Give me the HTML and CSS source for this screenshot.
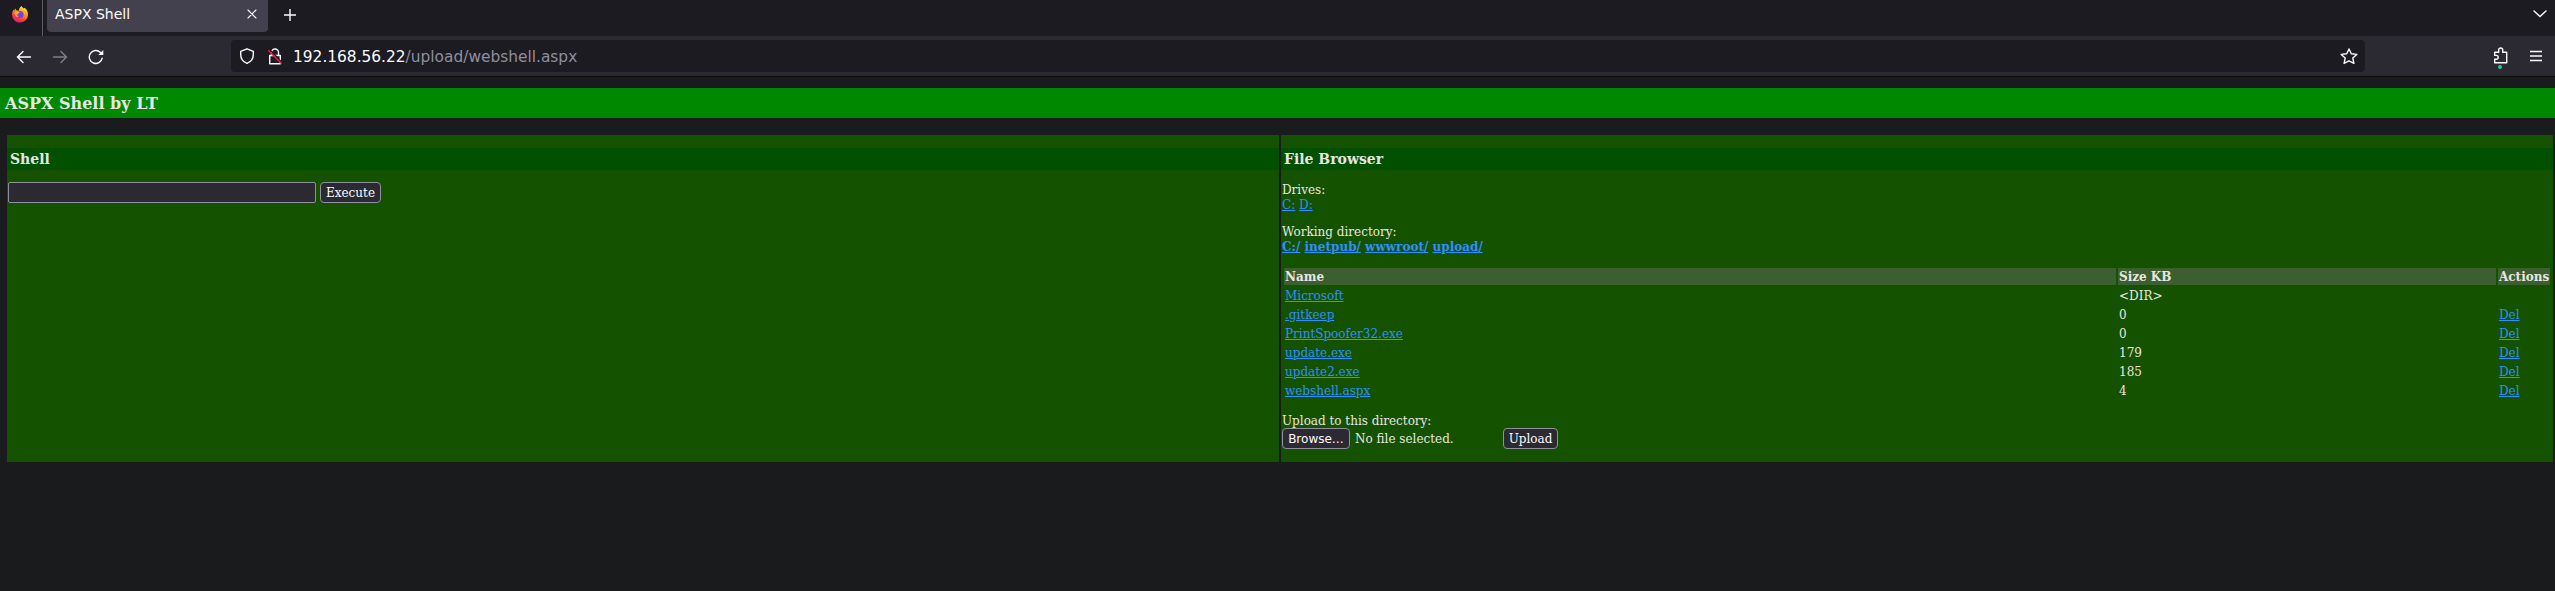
FILE: index.html
```html
<!DOCTYPE html>
<html lang="en">
<head>
<meta charset="utf-8">
<title>ASPX Shell</title>
<link rel="stylesheet" href="styles.css">
</head>
<body>
<header class="tabs">
  <div class="brand">
    <svg width="18" height="18" viewBox="0 0 18 18">
      <defs><linearGradient id="flame" x1=".8" y1="0" x2=".3" y2="1"><stop offset="0" stop-color="#fff44f"/><stop offset=".4" stop-color="#ff980e"/><stop offset=".75" stop-color="#ff3647"/><stop offset="1" stop-color="#e31587"/></linearGradient></defs>
      <path fill="url(#flame)" d="M10.3 1C11 2 12 2.6 12.800 3.500L13.500 2.700C15.800 4.300 17 6.700 17 9.400A8 8 0 0 1 1 9.800C1 7.500 1.700 5.700 2.700 4.500L3.200 5.500 4.300 3.500 5.300 5.300 7.800 5.700C8 3.800 9 2 10.300 1Z"/>
      <circle cx="9" cy="9.500" r="3.600" fill="#7542e5"/>
      <path fill="#ffa436" d="M3.500 7.200C5 6 7 6 8.800 7.500L7 8.800C5.500 9.300 6 11.500 8 11.600 6 13 3.500 11 3.500 7.200Z"/>
    </svg>
  </div>
  <div class="tab"><span>ASPX Shell</span>
    <svg width="10" height="10" viewBox="0 0 10 10"><path class="line thin" d="M1 1 9 9M9 1 1 9"/></svg>
  </div>
  <svg class="plus" width="12" height="12" viewBox="0 0 12 12"><path class="line" d="M6 0V12M0 6H12"/></svg>
  <svg class="chevron" width="14" height="8" viewBox="0 0 14 8"><path class="line" d="M1 1 7 6.500 13 1"/></svg>
</header>
<nav class="toolbar">
  <div class="nav-buttons">
    <svg width="16" height="16" viewBox="0 0 16 16"><path class="line" d="M14.500 8H1.500M7 2.500 1.500 8 7 13.500"/></svg>
    <svg class="dim" width="16" height="16" viewBox="0 0 16 16"><path class="line" d="M1.500 8H14.500M9 2.500 14.500 8 9 13.500"/></svg>
    <svg width="16" height="16" viewBox="0 0 16 16"><path class="line" d="M14.200 9.200A6.500 6.500 0 1 1 12.500 3.500"/><path fill="#fbfbfe" d="M15.300 1V6H10.300Z"/></svg>
  </div>
  <div class="urlbar">
    <svg width="16" height="16" viewBox="0 0 16 16"><path class="line" d="M8 .8 14.300 3.400V6.500C14.300 11 11.500 14 8 15.400 4.500 14 1.700 11 1.700 6.500V3.400Z" stroke-linejoin="round"/></svg>
    <svg class="lock" width="16" height="17" viewBox="0 0 16 17"><path class="line" d="M4.500 7V4.500A3.500 3.500 0 0 1 11.500 4.500V7M2.700 7.500H13.300V15.700H2.700Z" stroke-linejoin="round"/><path d="M2.800 1.700 15.500 15" stroke="#1c1b22" stroke-width="1.500"/><path d="M1.200 2.300 14.700 15.800" stroke="#ff0f47" stroke-width="1.400"/></svg>
    <span class="url"><span class="host">192.168.56.22</span>/upload/webshell.aspx</span>
    <svg class="star" width="18" height="17" viewBox="0 0 18 17"><path class="line" stroke-linejoin="round" d="M9 1 11.300 5.800 16.800 6.400 12.800 10 13.900 15.400 9 12.800 4.100 15.400 5.200 10 1.200 6.400 6.700 5.800Z"/></svg>
  </div>
  <div class="extension">
    <svg width="16" height="23" viewBox="0 0 16 23"><path class="line" stroke-linejoin="round" d="M1.700 5.300H5.700V3A2 2 0 0 1 9.700 3V5.300H13.700V15.800H1.700V12.200H3.300A1.900 1.900 0 0 0 3.300 8.400H1.700Z"/><circle cx="7" cy="20" r="2" fill="#2ac3a2"/></svg>
  </div>
  <svg class="menu" width="12" height="12" viewBox="0 0 12 12"><path class="line" d="M0 1.500H12M0 6H12M0 10.500H12"/></svg>
</nav>
<main>
  <h1>ASPX Shell by LT</h1>
  <div class="panels">
    <section>
      <h2>Shell</h2>
      <form class="command"><input type="text" aria-label="Command"><button type="button">Execute</button></form>
    </section>
    <section>
      <h2>File Browser</h2>
      <p>Drives:<br><a href="#">C:</a> <a href="#">D:</a></p>
      <p>Working directory:<br><b><a href="#">C:/</a> <a href="#">inetpub/</a> <a href="#">wwwroot/</a> <a href="#">upload/</a></b></p>
      <table>
        <colgroup><col><col class="size"><col class="actions"></colgroup>
        <tr><th>Name</th><th>Size KB</th><th>Actions</th></tr>
        <tr><td><a href="#">Microsoft</a></td><td>&lt;DIR&gt;</td><td></td></tr>
        <tr><td><a href="#">.gitkeep</a></td><td>0</td><td><a href="#">Del</a></td></tr>
        <tr><td><a href="#">PrintSpoofer32.exe</a></td><td>0</td><td><a href="#">Del</a></td></tr>
        <tr><td><a href="#">update.exe</a></td><td>179</td><td><a href="#">Del</a></td></tr>
        <tr><td><a href="#">update2.exe</a></td><td>185</td><td><a href="#">Del</a></td></tr>
        <tr><td><a href="#">webshell.aspx</a></td><td>4</td><td><a href="#">Del</a></td></tr>
      </table>
      <p class="upload-label">Upload to this directory:</p>
      <form class="upload"><button type="button" class="browse">Browse…</button><span>No file selected.</span><button type="button" class="send">Upload</button></form>
    </section>
  </div>
</main>
</body>
</html>
```
FILE: styles.css
```css
* { box-sizing: border-box; }
body { margin: 0; height: 591px; overflow: hidden; background: #1a1b1d; color: #e8e6e3; font: 12px/15px "DejaVu Serif", serif; }
svg { display: block; flex: none; }
.line { fill: none; stroke: #fbfbfe; stroke-width: 1.4; stroke-linecap: round; }
.thin { stroke-width: 1.1; }
.tabs { display: flex; height: 36px; background: #1c1b22; font-family: "DejaVu Sans", sans-serif; color: #fbfbfe; }
.brand { width: 43px; padding: 5px 0 0 11px; border-right: 1px solid #5b5b66; }
.tab { display: flex; justify-content: space-between; width: 221px; height: 32px; margin-left: 4px; padding: 6px 11px 0 8px; border-radius: 0 0 4px 4px; background: #42414d; font-size: 14px; line-height: 17px; }
.tab svg { margin-top: 3px; }
.plus { margin: 9px 0 0 16px; }
.chevron { margin: 10px 8px 0 auto; }
.toolbar { display: flex; height: 41px; background: #2b2a33; border-bottom: 1px solid #0c0c0d; }
.nav-buttons { display: flex; gap: 20px; width: 231px; padding: 13px 0 0 16px; }
.dim { opacity: .4; }
.urlbar { display: flex; width: 2134px; height: 32px; margin-top: 4px; padding: 8px 7px 0 8px; border-radius: 4px; background: #1c1b22; }
.lock { margin-left: 12px; }
.url { margin: 1px 0 0 10px; font: 15.4px/17px "DejaVu Sans", sans-serif; color: #8f8f9d; }
.host { color: #fbfbfe; }
.star { margin-left: auto; }
.extension { margin: 11px 0 0 128px; }
.menu { margin: 14px 0 0 21px; }
h1 { margin: 11px 0 17px; height: 30px; padding: 6px 5px 4px; background: #008800; font-size: 16px; line-height: 20px; }
.panels { display: grid; grid-template-columns: 1272px 1272px; gap: 2px; height: 327px; padding-left: 7px; }
section { padding: 13px 1px 0; background: #145200; }
h2 { margin: 0 -1px 12px; height: 22px; padding: 1px 3px; background: #005000; font-size: 14px; line-height: 20px; }
p { margin: 0 0 11px; padding-top: 1px; }
a { color: #2f8fff; }
input, button { height: 21px; border: 1px solid #8f8f9d; border-radius: 4px; background: #2b2a33; color: #fbfbfe; font: inherit; padding: 2px 0 0; }
input { width: 308px; border-radius: 2px; }
button { width: 61px; }
.command { display: flex; gap: 4px; }
table { width: 1270px; table-layout: fixed; border-spacing: 2px; margin-top: 11px; }
.size { width: 378px; }
.actions { width: 52px; }
td, th { height: 17px; padding: 2px 1px 0; text-align: left; line-height: 15px; }
th { background: #3c5f2f; }
.upload-label { margin: 12px 0 -1px; }
.upload { display: flex; }
.upload span { width: 153px; padding: 4px 0 0 5px; }
.browse { width: 68px; font-family: "DejaVu Sans", sans-serif; }
.send { width: 55px; }
```
